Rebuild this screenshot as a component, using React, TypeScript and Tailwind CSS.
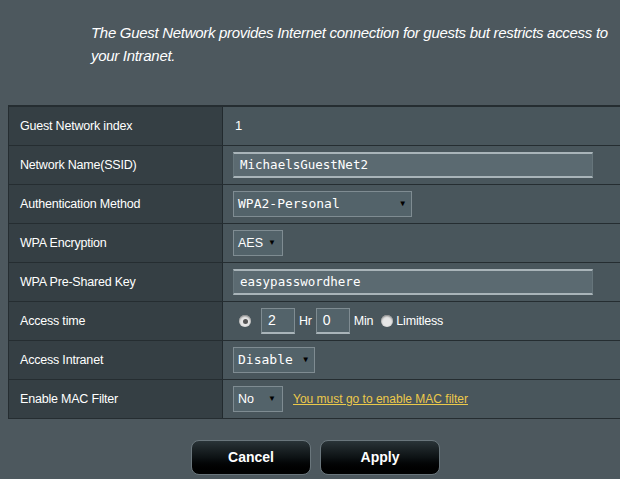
const rows = ["Guest Network index", "Network Name(SSID)", "Authentication Method", "WPA Encryption", "WPA Pre-Shared Key", "Access time", "Access Intranet", "Enable MAC Filter"];

function Caret() {
    return <span className="text-[8px] text-black leading-none">▼</span>;
}

function Select({ value, width, mono }: { value: string; width: string; mono?: boolean }) {
    return (
        <div className={`${width} h-[26px] flex items-center justify-between pl-[4px] pr-[6px] bg-[#53636a] border border-[#7f8c92] text-white ${mono ? "text-[13px] font-['DejaVu_Sans_Mono',monospace]" : "text-[12.5px] font-['Liberation_Sans',Arial,sans-serif]"}`}>
            <span>{value}</span>
            <Caret />
        </div>
    );
}

function TextInput({ value, width }: { value: string; width: string }) {
    return (
        <div className={`${width} h-[26px] flex items-center pl-[6px] bg-[#5b6a71] border-y-2 border-y-[#a9b4b9] border-x border-x-[#66757b] text-[12.5px] text-white font-['DejaVu_Sans_Mono',monospace]`}>
            {value}
        </div>
    );
}

function Radio({ checked }: { checked?: boolean }) {
    return (
        <span className="w-[12px] h-[12px] rounded-full bg-[#e6e6e6] flex items-center justify-center shadow-[inset_0_1px_2px_#777]">
            {checked && <span className="w-[5px] h-[5px] rounded-full bg-[#555]" />}
        </span>
    );
}

function SmallBox({ value }: { value: string }) {
    return (
        <div className="w-[34px] h-[26px] flex items-center pl-[6px] bg-[#53636a] border border-[#7f8c92] border-b-2 border-b-[#a9b4b9] text-[14px] text-white">
            {value}
        </div>
    );
}

export default function App() {
    const values = [
        <span className="text-[13px] text-white ml-[2px]">1</span>,
        <TextInput value="MichaelsGuestNet2" width="w-[360px]" />,
        <Select value="WPA2-Personal" width="w-[179px]" mono />,
        <Select value="AES" width="w-[50px]" />,
        <TextInput value="easypasswordhere" width="w-[360px]" />,
        <div className="flex items-center text-[12.5px] tracking-[-0.2px] text-white">
            <span className="ml-[6px] mr-[10px]"><Radio checked /></span>
            <SmallBox value="2" />
            <span className="mx-[4px]">Hr</span>
            <SmallBox value="0" />
            <span className="ml-[4px] mr-[8px]">Min</span>
            <Radio />
            <span className="ml-[3px]">Limitless</span>
        </div>,
        <Select value="Disable" width="w-[82px]" mono />,
        <div className="flex items-center">
            <Select value="No" width="w-[50px]" />
            <span className="ml-[10px] text-[12px] text-[#ecc94b] underline">You must go to enable MAC filter</span>
        </div>,
    ];

    return (
        <div className="w-[620px] h-[479px] overflow-hidden bg-[#4d585e] font-['Liberation_Sans',Arial,sans-serif]">
            <p className="pl-[91px] pt-[21px] text-[15px] tracking-[-0.3px] leading-[23px] italic text-white">
                The Guest Network provides Internet connection for guests but restricts access to your Intranet.
            </p>
            <div className="mt-[38px] ml-[8px] w-[640px] border-t-2 border-l border-[#252d31]">
                {rows.map((label, idx) => (
                    <div key={idx} className="flex h-[39px] border-b border-[#252d31]">
                        <div className="w-[214px] shrink-0 flex items-center pl-[11px] bg-[#353f44] border-r border-[#222a2e] text-[12.5px] tracking-[-0.2px] text-white">
                            {label}
                        </div>
                        <div className="flex-1 flex items-center pl-[10px] bg-[#49565c]">
                            {values[idx]}
                        </div>
                    </div>
                ))}
            </div>
            <div className="flex justify-center gap-[9px] mt-[21px] pl-[11px]">
                {["Cancel", "Apply"].map((b) => (
                    <button key={b} className="w-[120px] h-[35px] rounded-[8px] border border-[#6a767c] bg-gradient-to-b from-[#2a3438] via-[#0d1214] to-[#000000] text-white font-bold text-[14px]">
                        {b}
                    </button>
                ))}
            </div>
        </div>
    );
}
